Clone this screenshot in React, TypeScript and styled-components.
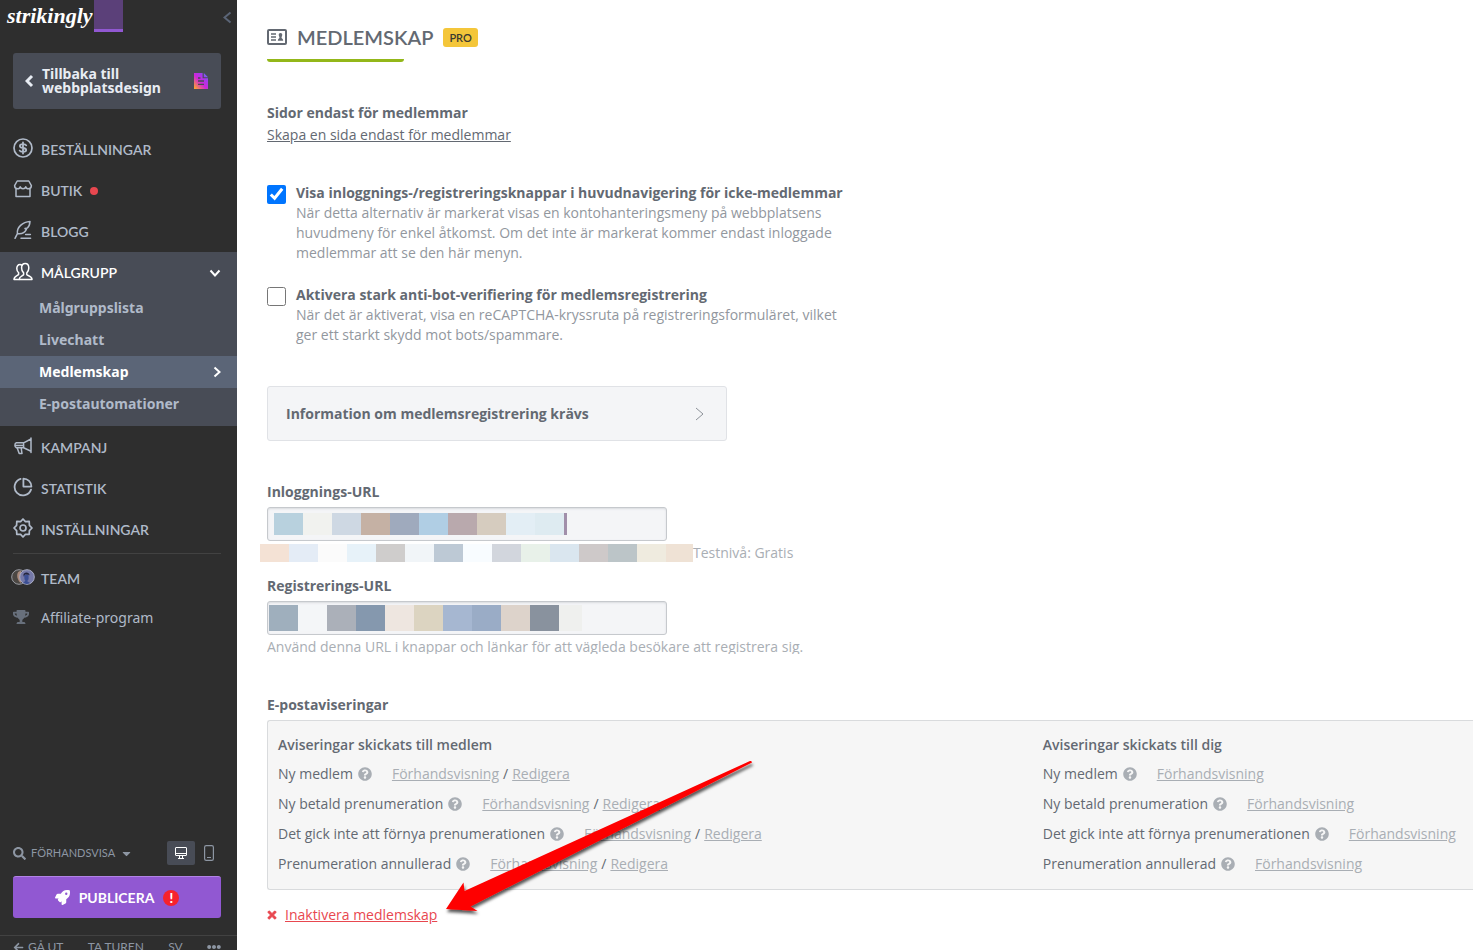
import React from 'react';
import styled, { createGlobalStyle } from 'styled-components';
import {
  FaArrowLeft,
  FaCaretDown,
  FaEllipsisH,
  FaQuestionCircle,
  FaRocket,
  FaSearch,
  FaTimes,
  FaTrophy,
} from 'react-icons/fa';

const body = '"Open Sans", "Noto Sans", sans-serif';
const caps = 'Lato, "Open Sans", sans-serif';
const ui = '"Noto Sans", "Open Sans", sans-serif';

const GlobalStyle = createGlobalStyle`
  *, *::before, *::after { box-sizing: border-box; }
  body { margin: 0; background: #fff; color: #636972; font: 14px/20px ${body}; }
  h1, h2, h3, p, ul { margin: 0; padding: 0; }
  ul { list-style: none; }
  button { font: inherit; border: 0; padding: 0; background: none; cursor: pointer; }
  svg { display: block; flex: none; }
`;

const Page = styled.div`
  display: grid;
  grid-template-columns: 237px minmax(0, 1fr);
  min-height: 100vh;
`;

/* ---------- Sidebar ---------- */

const Sidebar = styled.aside`
  display: flex;
  flex-direction: column;
  background: #2e2e2e;
  color: #b0bac9;
`;

const Brand = styled.div`
  display: flex;
  align-items: flex-start;
  height: 53px;
  padding: 0 5px 0 7px;
`;

const Logo = styled.a`
  width: 87px;
  color: #fff;
  font: italic 700 22px/32px "Liberation Serif", serif;
  text-decoration: none;
`;

const BrandTile = styled.div`
  width: 29px;
  height: 32px;
  background: #5b4079;
  border-bottom: 3px solid #9158d2;
`;

const Collapse = styled.button`
  margin: 11px 0 0 auto;
  color: #5b6577;
`;

const BackButton = styled.button`
  display: flex;
  align-items: center;
  gap: 8px;
  height: 56px;
  margin: 0 16px 20px 13px;
  padding: 0 13px 0 12px;
  border-radius: 3px;
  background: #484c56;
  color: #e8ecf3;
  font: 700 14px/14px ${ui};
  text-align: left;
`;

const BackLabel = styled.span`
  flex: 1;
`;

const NavRow = styled.a<{ $active?: boolean; $plain?: boolean }>`
  display: flex;
  align-items: center;
  gap: 8px;
  height: ${(p) => (p.$plain ? 38 : 41)}px;
  padding: 0 16px 0 13px;
  color: ${(p) => (p.$active ? '#fff' : '#b0bac9')};
  font: ${(p) => (p.$plain ? `400 14px/20px ${ui}` : `600 14px/20px ${caps}`)};
  text-decoration: none;
`;

const IconSlot = styled.span<{ $start?: boolean }>`
  display: flex;
  justify-content: ${(p) => (p.$start ? 'flex-start' : 'center')};
  width: 20px;
  margin-bottom: 3px;
`;

const Dot = styled.span`
  width: 8px;
  height: 8px;
  border-radius: 50%;
  background: #e8474f;
`;

const RowEnd = styled.span`
  margin-left: auto;
`;

const Group = styled.div`
  padding-bottom: 6px;
  margin-bottom: 1px;
  background: #484c56;

  & > ${NavRow} {
    height: 40px;
    padding-top: 2px;
  }
`;

const SubRow = styled.a<{ $active?: boolean }>`
  display: flex;
  align-items: center;
  justify-content: space-between;
  height: 32px;
  padding: 0 16px 0 39px;
  background: ${(p) => (p.$active ? '#5b6577' : 'transparent')};
  color: ${(p) => (p.$active ? '#fff' : '#b0bac9')};
  font: 700 14px/20px ${ui};
  text-decoration: none;
`;

const Divider = styled.hr`
  width: auto;
  height: 1px;
  margin: 3px 16px 4px 13px;
  border: 0;
  background: #424242;
`;

const Bottom = styled.div`
  margin-top: auto;
`;

const PreviewBar = styled.div`
  display: flex;
  align-items: center;
  height: 24px;
  margin: 0 14px 11px 13px;
`;

const PreviewButton = styled.button`
  display: flex;
  align-items: center;
  gap: 5px;
  margin-right: auto;
  color: #8d96a3;
  font: 400 11px/20px ${caps};
`;

const DeviceButton = styled.button<{ $active?: boolean }>`
  display: grid;
  place-items: center;
  width: 28px;
  height: 24px;
  border-radius: 2px;
  background: ${(p) => (p.$active ? '#484c56' : 'transparent')};
  color: ${(p) => (p.$active ? '#fff' : '#8d96a3')};
`;

const Publish = styled.button`
  display: flex;
  align-items: center;
  justify-content: center;
  gap: 9px;
  width: calc(100% - 29px);
  height: 42px;
  margin: 0 16px 17px 13px;
  border-top: 1px solid #b283e6;
  border-radius: 3px;
  background: #9158d2;
  color: #fff;
  font: 700 14px/20px ${caps};
`;

const Alert = styled.span`
  width: 16px;
  height: 16px;
  border-radius: 50%;
  background: #f6222d;
  font: 900 13px/16px ${caps};
  text-align: center;
`;

const FooterBar = styled.nav`
  display: flex;
  justify-content: space-between;
  height: 15px;
  padding: 1px 16px 0 13px;
  overflow: hidden;
  border-top: 1px solid #424242;
`;

const FooterLink = styled.a`
  display: flex;
  align-items: center;
  gap: 4px;
  height: 20px;
  color: #8d96a3;
  font: 400 12px/20px ${caps};
  text-decoration: none;
`;

/* ---------- Main ---------- */

const Main = styled.main`
  padding: 26px 0 24px 30px;
`;

const TitleRow = styled.header`
  display: flex;
  align-items: center;
  gap: 10px;
  height: 22px;
`;

const Title = styled.h1`
  font: 600 20px/22px ${caps};
`;

const Badge = styled.span`
  padding: 0 6px;
  border-radius: 3px;
  background: #f4c63a;
  color: #3a3a30;
  font: 600 11px/19px ${caps};
`;

const TitleBar = styled.div`
  width: 137px;
  height: 3px;
  margin: 11px 0 41px;
  border-radius: 0 0 3px 3px;
  background: #93b719;
`;

const Strong = styled.h2`
  font: 700 14px/20px ${body};
`;

const TextLink = styled.a<{ $tone?: 'muted' | 'danger' }>`
  color: ${(p) => (p.$tone === 'muted' ? '#a9aeb4' : p.$tone === 'danger' ? '#e8474f' : '#636972')};
  text-decoration: underline;
`;

const Section = styled.section<{ $gap: number }>`
  display: flex;
  flex-direction: column;
  align-items: flex-start;
  gap: 2px;
  margin-bottom: ${(p) => p.$gap}px;
`;

const Option = styled.label<{ $gap: number }>`
  display: grid;
  grid-template-columns: 19px minmax(0, 560px);
  column-gap: 10px;
  margin-bottom: ${(p) => p.$gap}px;
`;

const Check = styled.input`
  width: 19px;
  height: 19px;
  margin: 2px 0 0;
  accent-color: #0075ff;
`;

const OptionTitle = styled.span`
  display: block;
  font-weight: 700;
`;

const OptionText = styled.span`
  display: block;
  color: #92979e;
`;

const InfoCard = styled.button`
  display: flex;
  align-items: center;
  justify-content: space-between;
  width: 460px;
  max-width: 100%;
  height: 55px;
  margin-bottom: 41px;
  padding: 0 22px 0 18px;
  border: 1px solid #e0e2e6;
  border-radius: 3px;
  background: #f4f5f7;
  color: #636972;
  font: 700 14px/20px ${body};

  & > svg {
    color: #8d9299;
  }
`;

const FieldLabel = styled.label`
  display: block;
  margin-bottom: 5px;
  font-weight: 700;
`;

const Field = styled.div<{ $inset: number }>`
  display: flex;
  align-items: center;
  width: 400px;
  max-width: 100%;
  height: 34px;
  padding-left: ${(p) => p.$inset}px;
  border: 1px solid #c6c9cd;
  border-radius: 3px;
  background: #f4f5f7;
  box-shadow: inset 0 1px 2px #d9dbdf;
`;

const UrlInput = styled.input`
  flex: 1;
  min-width: 0;
  height: 30px;
  border: 0;
  outline: 0;
  background: transparent;
  font: inherit;
`;

const Tile = styled.span<{ $color: string; $w: number; $h: number }>`
  flex: none;
  width: ${(p) => p.$w}px;
  height: ${(p) => p.$h}px;
  background: ${(p) => p.$color};
`;

const StripHint = styled.p`
  display: flex;
  align-items: center;
  height: 18px;
  margin: 3px 0 14px -7px;
  color: #a9aeb4;
`;

const Hint = styled.p`
  height: 17px;
  margin: 2px 0 41px;
  overflow: hidden;
  color: #a9aeb4;
`;

const Notifications = styled.section`
  position: relative;
  margin-bottom: 15px;
`;

const Panel = styled.div`
  display: grid;
  grid-template-columns: 16fr 9fr;
  margin-top: 5px;
  padding: 14px 0 10px 10px;
  border: 1px solid #d9dbdd;
  border-right: 0;
  border-radius: 3px 0 0 3px;
  background: #f6f6f6;
`;

const PanelTitle = styled.h3`
  margin-bottom: 4px;
  font: 600 14px/20px ${body};
`;

const NoticeRow = styled.li`
  display: flex;
  align-items: center;
  height: 30px;
  white-space: nowrap;
`;

const HelpButton = styled.button`
  margin: 0 20px 0 5px;
  color: #a9aeb4;
`;

const Slash = styled.span`
  padding: 0 4px;
`;

const Arrow = styled.svg`
  position: absolute;
  top: 60px;
  left: 170px;
  pointer-events: none;
`;

const Deactivate = styled.div`
  display: flex;
  align-items: center;
  gap: 7px;
  margin-left: -1px;
  color: #e8474f;
`;

/* ---------- Icons ---------- */

const Line: React.FC<{ size?: number; width?: number; children: React.ReactNode }> = ({
  size = 20,
  width = 1.5,
  children,
}) => (
  <svg
    width={size}
    height={size}
    viewBox="0 0 20 20"
    fill="none"
    stroke="currentColor"
    strokeWidth={width}
    strokeLinecap="round"
    strokeLinejoin="round"
    aria-hidden="true"
  >
    {children}
  </svg>
);

const OrdersIcon = () => (
  <Line width={1.7}>
    <circle cx="10" cy="10" r="9" />
    <path strokeWidth="1.8" d="M13.2 7.4C12.8 6.6 12 6.2 10 6.2C8 6.2 6.9 6.8 6.9 8C6.9 9.4 8 9.8 10 10C12 10.2 13.2 10.7 13.2 12C13.2 13.3 12 13.9 10 13.9C8 13.9 7.1 13.4 6.7 12.6M10 4.4V15.6" />
  </Line>
);

const StoreIcon = () => (
  <Line>
    <path d="M4.2 2H15.8L18.4 6.6C18.4 8.8 17.2 9.8 15.6 9.8C14 9.8 13 8.8 12.8 7.8C12.4 9.2 11.4 9.8 10 9.8C8.6 9.8 7.6 9.2 7.2 7.8C7 8.8 6 9.8 4.4 9.8C2.8 9.8 1.6 8.8 1.6 6.6ZM3 10V17.6H17V10" />
  </Line>
);

const BlogIcon = () => (
  <Line>
    <path d="M2 18.3L4.4 13.6C3.6 7.6 9.4 1.8 17 1.4C16.8 4.6 16 6.6 14.4 8L12 8.6L13.4 9.4C12 12.4 8.4 14.2 4.4 13.6M12.6 14.4H17.4M8 18.2H17.6" />
  </Line>
);

const AudienceIcon = () => (
  <Line>
    <path d="M12.2 1.6C14.6 1.6 15.8 3.4 15.8 6C15.8 8.4 15 9.8 13.8 10.8V12.6C14.6 14 19 14 19 17.4H6.2C6.2 14.2 10 14 10.6 12.6V10.8C9.4 9.8 8.6 8.4 8.6 6C8.6 3.4 9.8 1.6 12.2 1.6Z" />
    <path d="M8.8 3.2C8.3 2.8 7.7 2.6 7 2.6C4.9 2.6 3.8 4.2 3.8 6.4C3.8 8.6 4.5 9.8 5.6 10.7V12.4C5 13.8 1 14 1 17.4H6" />
  </Line>
);

const CampaignIcon = () => (
  <Line>
    <path d="M18 2V16.4M18 3L10.6 6.8H3.4C1.4 7.4 1.4 11 3.4 11.8H10.6L18 15.2M10.6 6.8V11.8M4.2 12L6.2 17.6H9L8.2 12M2.4 9.4H10.6" />
  </Line>
);

const StatsIcon = () => (
  <Line width={1.8}>
    <path d="M7.6 1.9A8.4 8.4 0 1 0 18 12.6M10.4 1.6V9.6H18.4A8 8 0 0 0 10.4 1.6Z" />
  </Line>
);

const SettingsIcon = () => (
  <Line width={1.7}>
    <path d="M10 1L12.4 3.6L16.2 3.4L16.4 7.4L19 10L16.4 12.6L16.2 16.4L12.4 16.4L10 19L7.6 16.4L3.8 16.4L3.6 12.6L1 10L3.6 7.4L3.8 3.4L7.6 3.6Z" />
    <circle cx="10" cy="10" r="3" />
  </Line>
);

const TeamIcon = () => (
  <svg width="24" height="18" viewBox="0 0 24 18" aria-hidden="true">
    <circle cx="8" cy="9" r="7.3" fill="#4b4743" stroke="#9a9ca3" />
    <path d="M9 3C6 4 6 7 6.4 9.4C7 12 8.4 14 10 15V3Z" fill="#a98a7c" />
    <circle cx="16" cy="9" r="7.3" fill="#7579a8" stroke="#a9adc4" />
    <path d="M12.4 7C12.4 3.6 18.6 3.4 18.6 7.4L17.6 6.8L14 6.6L13 9Z" fill="#23253e" />
    <path d="M13.4 7H17.6V10.4C17.4 12.4 16.4 12.6 16 13L19 15C16.6 16.4 13.4 16 12 15L14.4 12.8C13.4 12 13.2 10 13.4 7Z" fill="#3b4f94" />
  </svg>
);

const DocIcon = () => (
  <svg width="14" height="16" viewBox="0 0 14 16" aria-hidden="true">
    <defs>
      <linearGradient id="doc" x1="0" y1="1" x2="1" y2="0">
        <stop offset="0" stopColor="#ffb21c" />
        <stop offset="0.45" stopColor="#d026d8" />
        <stop offset="0.75" stopColor="#a03cf0" />
        <stop offset="1" stopColor="#3f9bff" />
      </linearGradient>
    </defs>
    <path fill="url(#doc)" d="M0 0H8.6V5.2H14V16H0ZM9.8 0L14 4.2H9.8Z" />
    <path stroke="#484c56" strokeWidth="1.4" d="M4 5H6.4M4 8H10M4 11.4H10" />
  </svg>
);

const MemberCardIcon = () => (
  <svg width="20" height="16" viewBox="0 0 20 16" fill="none" stroke="currentColor" aria-hidden="true">
    <rect x="1" y="1" width="18" height="14" rx="1" strokeWidth="2" />
    <path strokeWidth="1.4" d="M4 5H9M4 8H9M4 11H9" />
    <path fill="currentColor" stroke="none" d="M13.5 4C15 4 15.4 5 15.2 6.2C15 7.2 14.6 7.6 14.5 8.4C14.6 9.4 16.2 9.6 16.2 11.8H10.8C10.8 9.6 12.4 9.4 12.5 8.4C12.4 7.6 12 7.2 11.8 6.2C11.6 5 12 4 13.5 4Z" />
  </svg>
);

const Chevron: React.FC<{ dir: 'left' | 'right' | 'down'; w: number; h: number; stroke: number }> = ({
  dir,
  w,
  h,
  stroke,
}) => {
  const s = stroke / 2 + 0.5;
  const d =
    dir === 'down'
      ? `M${s} ${s}L${w / 2} ${h - s}L${w - s} ${s}`
      : dir === 'left'
        ? `M${w - s} ${s}L${s} ${h / 2}L${w - s} ${h - s}`
        : `M${s} ${s}L${w - s} ${h / 2}L${s} ${h - s}`;
  return (
    <svg width={w} height={h} fill="none" stroke="currentColor" strokeWidth={stroke} aria-hidden="true">
      <path d={d} />
    </svg>
  );
};

const DesktopIcon = () => (
  <svg width="12" height="12" viewBox="0 0 12 12" fill="none" stroke="currentColor" aria-hidden="true">
    <rect x="0.5" y="0.5" width="11" height="8" rx="0.5" />
    <path d="M0.5 6.5H11.5M4.5 8.5V11M7.5 8.5V11M3 11.5H9" />
  </svg>
);

const PhoneIcon = () => (
  <svg width="10" height="16" viewBox="0 0 10 16" fill="none" stroke="currentColor" aria-hidden="true">
    <rect x="0.6" y="0.6" width="8.8" height="14.8" rx="1.6" strokeWidth="1.2" />
    <path d="M3 12.5H7" />
  </svg>
);

/* ---------- Data ---------- */

const loginTiles = ['#b8d1de', '#f1f2ef', '#ced8e3', '#c5b1a4', '#9faabd', '#b0cee4', '#b9a9ad', '#d6ccbf', '#e3eef5', '#deebf1'];
const hintTiles = ['#f4e2d5', '#e4ecf6', '#fbfbfb', '#e7f2f9', '#cfcdcc', '#f1f5f8', '#bdc9d5', '#f8fcff', '#d2d6dd', '#e8f1e9', '#dae6ef', '#cec9c9', '#bcc5c8', '#efebdf'];
const signupTiles = ['#9fafbd', '#f4f6f8', '#abb0b9', '#8598ae', '#eee6e0', '#dcd4c1', '#a6b7d1', '#9aacc6', '#ddd3cb', '#89929e'];
const notices = ['Ny medlem', 'Ny betald prenumeration', 'Det gick inte att förnya prenumerationen', 'Prenumeration annullerad'];

const Tiles: React.FC<{ colors: string[]; height: number }> = ({ colors, height }) => (
  <>
    {colors.map((c) => (
      <Tile key={c} $color={c} $w={29} $h={height} />
    ))}
  </>
);

const NavItem: React.FC<{
  icon: React.ReactNode;
  label: string;
  active?: boolean;
  plain?: boolean;
  children?: React.ReactNode;
}> = ({ icon, label, active, plain, children }) => (
  <NavRow href="#" $active={active} $plain={plain}>
    <IconSlot $start={plain}>{icon}</IconSlot>
    <span>{label}</span>
    {children}
  </NavRow>
);

const NoticeColumn: React.FC<{ title: string; editable?: boolean }> = ({ title, editable }) => (
  <div>
    <PanelTitle>{title}</PanelTitle>
    <ul>
      {notices.map((n) => (
        <NoticeRow key={n}>
          {n}
          <HelpButton type="button" aria-label={`Hjälp: ${n}`}>
            <FaQuestionCircle size={14} />
          </HelpButton>
          <TextLink href="#" $tone="muted">Förhandsvisning</TextLink>
          {editable && (
            <>
              <Slash>/</Slash>
              <TextLink href="#" $tone="muted">Redigera</TextLink>
            </>
          )}
        </NoticeRow>
      ))}
    </ul>
  </div>
);

export default function App() {
  return (
    <>
      <GlobalStyle />
      <Page>
        <Sidebar>
          <Brand>
            <Logo href="#">strikingly</Logo>
            <BrandTile />
            <Collapse type="button" aria-label="Dölj meny">
              <Chevron dir="left" w={9} h={13} stroke={2} />
            </Collapse>
          </Brand>
          <BackButton type="button">
            <Chevron dir="left" w={9} h={14} stroke={3} />
            <BackLabel>Tillbaka till webbplatsdesign</BackLabel>
            <DocIcon />
          </BackButton>
          <nav>
            <NavItem icon={<OrdersIcon />} label="BESTÄLLNINGAR" />
            <NavItem icon={<StoreIcon />} label="BUTIK">
              <Dot />
            </NavItem>
            <NavItem icon={<BlogIcon />} label="BLOGG" />
            <Group>
              <NavItem icon={<AudienceIcon />} label="MÅLGRUPP" active>
                <RowEnd>
                  <Chevron dir="down" w={12} h={8} stroke={2} />
                </RowEnd>
              </NavItem>
              <SubRow href="#">Målgruppslista</SubRow>
              <SubRow href="#">Livechatt</SubRow>
              <SubRow href="#" $active>
                Medlemskap
                <Chevron dir="right" w={8} h={12} stroke={2} />
              </SubRow>
              <SubRow href="#">E-postautomationer</SubRow>
            </Group>
            <NavItem icon={<CampaignIcon />} label="KAMPANJ" />
            <NavItem icon={<StatsIcon />} label="STATISTIK" />
            <NavItem icon={<SettingsIcon />} label="INSTÄLLNINGAR" />
            <Divider />
            <NavItem icon={<TeamIcon />} label="TEAM" />
            <NavItem icon={<FaTrophy size={16} color="#68707c" />} label="Affiliate-program" plain />
          </nav>
          <Bottom>
            <PreviewBar>
              <PreviewButton type="button">
                <FaSearch size={13} />
                FÖRHANDSVISA
                <FaCaretDown size={13} />
              </PreviewButton>
              <DeviceButton type="button" aria-label="Dator" $active>
                <DesktopIcon />
              </DeviceButton>
              <DeviceButton type="button" aria-label="Mobil">
                <PhoneIcon />
              </DeviceButton>
            </PreviewBar>
            <Publish type="button">
              <FaRocket size={15} />
              PUBLICERA
              <Alert>!</Alert>
            </Publish>
            <FooterBar>
              <FooterLink href="#"><FaArrowLeft size={11} />GÅ UT</FooterLink>
              <FooterLink href="#">TA TUREN</FooterLink>
              <FooterLink href="#">SV</FooterLink>
              <FooterLink href="#" aria-label="Mer"><FaEllipsisH size={14} /></FooterLink>
            </FooterBar>
          </Bottom>
        </Sidebar>

        <Main>
          <TitleRow>
            <MemberCardIcon />
            <Title>MEDLEMSKAP</Title>
            <Badge>PRO</Badge>
          </TitleRow>
          <TitleBar />

          <Section $gap={38}>
            <Strong>Sidor endast för medlemmar</Strong>
            <TextLink href="#">Skapa en sida endast för medlemmar</TextLink>
          </Section>

          <Option $gap={22}>
            <Check type="checkbox" defaultChecked />
            <span>
              <OptionTitle>Visa inloggnings-/registreringsknappar i huvudnavigering för icke-medlemmar</OptionTitle>
              <OptionText>
                När detta alternativ är markerat visas en kontohanteringsmeny på webbplatsens huvudmeny för enkel
                åtkomst. Om det inte är markerat kommer endast inloggade medlemmar att se den här menyn.
              </OptionText>
            </span>
          </Option>
          <Option $gap={41}>
            <Check type="checkbox" />
            <span>
              <OptionTitle>Aktivera stark anti-bot-verifiering för medlemsregistrering</OptionTitle>
              <OptionText>
                När det är aktiverat, visa en reCAPTCHA-kryssruta på registreringsformuläret, vilket ger ett starkt
                skydd mot bots/spammare.
              </OptionText>
            </span>
          </Option>

          <InfoCard type="button">
            Information om medlemsregistrering krävs
            <Chevron dir="right" w={9} h={14} stroke={1} />
          </InfoCard>

          <FieldLabel htmlFor="login-url">Inloggnings-URL</FieldLabel>
          <Field $inset={6}>
            <Tiles colors={loginTiles} height={22} />
            <Tile $color="#a18faa" $w={3} $h={22} />
            <UrlInput id="login-url" type="text" readOnly />
          </Field>
          <StripHint>
            <Tiles colors={hintTiles} height={18} />
            <Tile $color="#efe2d5" $w={27} $h={18} />
            Testnivå: Gratis
          </StripHint>

          <FieldLabel htmlFor="signup-url">Registrerings-URL</FieldLabel>
          <Field $inset={1}>
            <Tiles colors={signupTiles} height={26} />
            <Tile $color="#eff0ee" $w={23} $h={26} />
            <UrlInput id="signup-url" type="text" readOnly />
          </Field>
          <Hint>Använd denna URL i knappar och länkar för att vägleda besökare att registrera sig.</Hint>

          <Notifications>
            <Strong>E-postaviseringar</Strong>
            <Panel>
              <NoticeColumn title="Aviseringar skickats till medlem" editable />
              <NoticeColumn title="Aviseringar skickats till dig" />
            </Panel>
            <Arrow width="330" height="170" viewBox="437 755 330 170" aria-hidden="true">
              <defs>
                <filter id="arrow-shadow" x="-10%" y="-10%" width="120%" height="120%">
                  <feDropShadow dx="1" dy="3" stdDeviation="1.5" floodColor="#000" floodOpacity="0.65" />
                </filter>
              </defs>
              <path
                fill="#fe0000"
                filter="url(#arrow-shadow)"
                d="M446 909L463.5 882.5L464.5 891L750 761Q752 760.5 752 762.5L470.5 906.5L477.5 911Z"
              />
            </Arrow>
          </Notifications>

          <Deactivate>
            <FaTimes size={12} strokeWidth={30} stroke="currentColor" />
            <TextLink href="#" $tone="danger">Inaktivera medlemskap</TextLink>
          </Deactivate>
        </Main>
      </Page>
    </>
  );
}
